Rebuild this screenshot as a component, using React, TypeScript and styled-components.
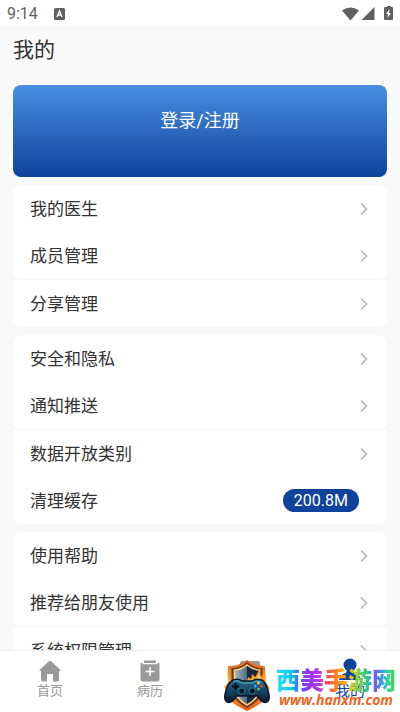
import React from "react";
import styled, { createGlobalStyle, css } from "styled-components";

const sans = `Roboto, "Noto Sans CJK SC", sans-serif`;

const GlobalStyle = createGlobalStyle`
  *, *::before, *::after { box-sizing: border-box; }
  body { margin: 0; background: #f9f9f9; font-family: ${sans}; color: #333; }
  button { border: 0; padding: 0; background: none; font: inherit; color: inherit; cursor: pointer; }
`;

const Screen = styled.div`
  position: relative;
  display: flex;
  flex-direction: column;
  height: 100vh;
  overflow: hidden;
`;

const StatusBar = styled.header`
  display: flex;
  flex: none;
  align-items: center;
  gap: 16px;
  height: 26px;
  padding: 2px 7px 0;
  background: #fff;
  color: #5f5f5f;
`;

const Clock = styled.time`
  font-size: 16px;
  line-height: 20px;
`;

const StatusIcons = styled.div`
  display: flex;
  align-items: center;
  margin-left: auto;
`;

const Content = styled.main`
  display: flex;
  flex: 1;
  flex-direction: column;
  gap: 8px;
  min-height: 0;
  padding: 0 13px;
  overflow: hidden;
`;

const Title = styled.h1`
  flex: none;
  margin: 0;
  height: 51px;
  font-size: 21px;
  font-weight: 400;
  line-height: 49px;
`;

const LoginCard = styled.button`
  flex: none;
  height: 92px;
  && { padding-bottom: 20px; }
  border-radius: 8px;
  && { background: linear-gradient(#488fe0, #0f439b); color: #fff; }
  font-size: 18px;
  line-height: 24px;
`;

const Group = styled.section`
  flex: none;
  border-radius: 8px;
  overflow: hidden;
`;

const Row = styled.button`
  display: flex;
  align-items: center;
  justify-content: space-between;
  width: 100%;
  height: 47px;
  && {
    padding: 0 18px 0 17px;
    background: #fff;
    font-size: 17px;
    line-height: 24px;
    text-align: left;
  }
  &:nth-child(even):not(:last-child) {
    margin-bottom: 1px;
    border-radius: 0 0 6px 6px;
  }
`;

const CacheSize = styled.span`
  margin-right: 10px;
  padding: 0 11px;
  border-radius: 12px;
  background: #0f439b;
  color: #fff;
  font-size: 16px;
  line-height: 23px;
`;

const TabBar = styled.nav`
  display: grid;
  flex: none;
  grid-template-columns: repeat(4, 1fr);
  height: 62px;
  border-top: 1px solid #f1f1f1;
  background: #fff;
`;

const Tab = styled.button<{ $active?: boolean }>`
  && {
    display: flex;
    flex-direction: column;
    align-items: center;
    padding-top: 9px;
    color: #999;
    font-size: 13px;
    line-height: 18px;
  }
  svg { display: block; }
  ${(p) => p.$active && css`
    && { color: #0f439b; font-size: 15px; padding-top: 7px; }
  `}
`;

const Watermark = styled.aside`
  position: absolute;
  right: 4px;
  bottom: 0;
  display: flex;
  align-items: center;
  gap: 5px;
  pointer-events: none;
`;

const WatermarkText = styled.div`
  display: flex;
  flex-direction: column;
  align-items: center;
`;

const SiteName = styled.strong`
  background: linear-gradient(90deg, #18e0f4, #18c8f4 13%, #3f6cf0 19%, #8a38f0 25%, #b838e8 36%, #f04868 42%, #ff8418 50%, #ffb818 60%, #a8d828 66%, #38cc78 74%, #28b4c8 79%, #7858f0 83%, #38a0f0 88%, #30d0a0 93%, #48d838);
  background-clip: text;
  -webkit-background-clip: text;
  color: transparent;
  font-family: "Noto Sans CJK SC", sans-serif;
  font-size: 24px;
  font-weight: 900;
  line-height: 27px;
`;

const SiteAddress = styled.span`
  color: #ef6524;
  font-family: "Open Sans", sans-serif;
  font-size: 14px;
  font-style: italic;
  font-weight: 700;
  line-height: 16px;
`;

function Chevron() {
  return (
    <svg width="10" height="14" viewBox="0 0 10 14" fill="none" stroke="#b4b4b4" strokeWidth="1.6" aria-hidden="true">
      <path d="M2 1.5 7.5 7 2 12.5" />
    </svg>
  );
}

function InputBadge() {
  return (
    <svg width="11" height="12" viewBox="0 0 11 12" aria-hidden="true">
      <rect width="11" height="12" rx="1.5" fill="#606060" />
      <path d="m3 9 2.5-6L8 9M4 7h3" fill="none" stroke="#fff" strokeWidth="1.3" />
    </svg>
  );
}

function DeviceStatus() {
  return (
    <svg width="51" height="16" viewBox="0 0 51 16" fill="#606060" aria-hidden="true">
      <path d="M0 4.5Q8.5-1.5 17 4.500L8.500 14.500Z" />
      <path d="M32.500 1v13h-13Z" />
      <path d="M43 1h2V0h4v1h1q1 0 1 1v11q0 1-1 1h-7q-1 0-1-1V2q0-1 1-1Z" />
      <path d="m47.500 3-3.500 5h2l-.5 4L49 7h-2Z" fill="#fff" />
    </svg>
  );
}

function HomeIcon() {
  return (
    <svg width="22" height="22" viewBox="0 0 22 22" fill="#999" aria-hidden="true">
      <path d="M9.800 1.200q1.200-1 2.400 0l9 8.500q1 1.300-.5 1.300H20v9q0 1.500-1.500 1.500H14V14H8v7.500H3.500Q2 21.500 2 20v-9H1.300q-1.500 0-.5-1.300Z" />
    </svg>
  );
}

function RecordIcon() {
  return (
    <svg width="22" height="22" viewBox="0 0 22 22" fill="#999" aria-hidden="true">
      <path d="M6 .5h10q1 0 1 1V3H5V1.500q0-1 1-1ZM1.500 3h2v1.200h15V3h2v16q0 2.500-2.500 2.500H4Q1.500 21.500 1.500 19Z" />
      <path d="M11 7v9M6.500 11.500h9" stroke="#fff" strokeWidth="1.500" />
    </svg>
  );
}

function FolderIcon() {
  return (
    <svg width="20" height="22" viewBox="0 0 20 22" fill="#999" aria-hidden="true">
      <rect y="1" width="20" height="20" rx="2" />
    </svg>
  );
}

function PersonIcon() {
  return (
    <svg width="24" height="24" viewBox="0 0 24 24" fill="#0f439b" aria-hidden="true">
      <circle cx="12" cy="7" r="6.500" />
      <path d="M9 12h6l1 3q6 1 7 7H1q1-6 7-7Z" />
    </svg>
  );
}

function ShieldLogo() {
  return (
    <svg width="48" height="52" viewBox="0 0 46 52" preserveAspectRatio="none" aria-hidden="true">
      <defs>
        <linearGradient id="flame" x2="0" y2="1">
          <stop stopColor="#d9601b" />
          <stop offset=".45" stopColor="#ffb13a" />
          <stop offset="1" stopColor="#ed5715" />
        </linearGradient>
        <linearGradient id="steel">
          <stop stopColor="#a9bcc4" />
          <stop offset=".48" stopColor="#4d7186" />
          <stop offset=".5" stopColor="#152b43" />
          <stop offset="1" stopColor="#172236" />
        </linearGradient>
        <linearGradient id="pad" x2="0" y2="1">
          <stop stopColor="#286d8d" />
          <stop offset=".5" stopColor="#164563" />
          <stop offset="1" stopColor="#09192c" />
        </linearGradient>
      </defs>
      <path d="M23 0Q30 6 40 6q1 10 1 16l4 6-3 4q-1 9-10 14l-9 5-9-5Q5 41 4 32l-3-5 4-5Q4 14 5 6 16 6 23 0Z" fill="url(#flame)" />
      <path d="M23 2Q29 8 38 8v19q0 13-15 21Q8 40 8 27V8q9 0 15-6Z" fill="#733a21" />
      <path d="M23 5q6 5 12 5v18q0 10-12 17-12-7-12-17V10q6 0 12-5Z" fill="url(#steel)" stroke="#ffd078" strokeWidth="1.500" />
      <path d="m22 24 2-7 3 2 1-5 3 3 4-8 1 8 3-3v13Z" fill="#ff9b21" />
      <path d="m25 24 3-5 3 2 4-7 1 9Z" fill="#ffe18a" />
      <path d="M10 20q5-2 8 1h10q4-3 9-1 4 2 6 10 3 10-1 12-4 2-9-6H13q-5 8-9 6-4-2-1-12 2-8 7-10Z" fill="url(#pad)" stroke="#0b1928" strokeWidth="1.500" />
      <path d="M10 21q5-1 8 2h10q4-3 9-1" fill="none" stroke="#5bafc9" />
      <path d="M12 23v7M8.500 26.500h7" stroke="#081524" strokeWidth="2.500" />
      <circle cx="18" cy="31" r="3" fill="#0a1727" stroke="#36708a" />
      <circle cx="28" cy="31" r="3" fill="#0a1727" stroke="#36708a" />
      <circle cx="34" cy="23" r="1.500" fill="#e5c343" />
      <circle cx="37" cy="26" r="1.500" fill="#e7463b" />
      <circle cx="34" cy="29" r="1.500" fill="#58b577" />
      <circle cx="31" cy="26" r="1.500" fill="#42a2d7" />
    </svg>
  );
}

type Item = { label: string; value?: string };

const groups: Item[][] = [
  [{ label: "我的医生" }, { label: "成员管理" }, { label: "分享管理" }],
  [{ label: "安全和隐私" }, { label: "通知推送" }, { label: "数据开放类别" }, { label: "清理缓存", value: "200.8M" }],
  [{ label: "使用帮助" }, { label: "推荐给朋友使用" }, { label: "系统权限管理" }],
];

export default function App() {
  return (
    <Screen>
      <GlobalStyle />
      <StatusBar>
        <Clock>9:14</Clock>
        <InputBadge />
        <StatusIcons><DeviceStatus /></StatusIcons>
      </StatusBar>
      <Content>
        <Title>我的</Title>
        <LoginCard type="button">登录/注册</LoginCard>
        {groups.map((items) => (
          <Group key={items[0].label}>
            {items.map((item) => (
              <Row key={item.label} type="button">
                <span>{item.label}</span>
                {item.value ? <CacheSize>{item.value}</CacheSize> : <Chevron />}
              </Row>
            ))}
          </Group>
        ))}
      </Content>
      <TabBar>
        <Tab type="button"><HomeIcon />首页</Tab>
        <Tab type="button"><RecordIcon />病历</Tab>
        <Tab type="button"><FolderIcon /></Tab>
        <Tab type="button" $active><PersonIcon />我的</Tab>
      </TabBar>
      <Watermark>
        <ShieldLogo />
        <WatermarkText>
          <SiteName>西美手游网</SiteName>
          <SiteAddress>www.hanxm.com</SiteAddress>
        </WatermarkText>
      </Watermark>
    </Screen>
  );
}
